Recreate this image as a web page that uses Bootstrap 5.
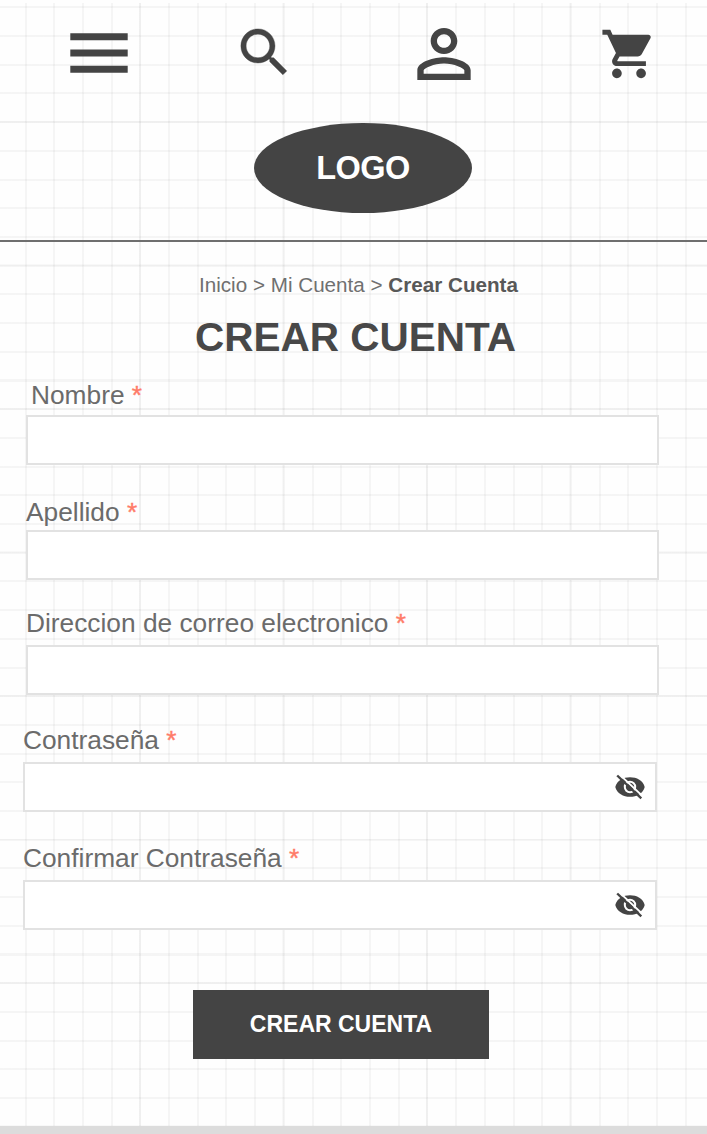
<!DOCTYPE html>
<html lang="es">
<head>
<meta charset="utf-8">
<meta name="viewport" content="width=device-width, initial-scale=1">
<title>Crear Cuenta</title>
<link href="https://cdn.jsdelivr.net/npm/bootstrap@5.3.0/dist/css/bootstrap.min.css" rel="stylesheet">
<style>
  body { font-family: "Liberation Sans", Arial, sans-serif; color: #484848; background: #fefefe; }
  .screen {
    height: 1134px; border-bottom: 8px solid #dcdcdc;
    background:
      linear-gradient(#fefefe 0 3px, transparent 3px),
      repeating-linear-gradient(90deg, transparent 0 139px, rgba(0,0,0,.025) 139px 141px, transparent 141px 143.5px),
      repeating-linear-gradient(transparent 0 121px, rgba(0,0,0,.025) 121px 123px, transparent 123px 143.5px),
      repeating-linear-gradient(90deg, transparent 0 24.6px, rgba(0,0,0,.036) 24.6px 26.6px, transparent 26.6px 28.7px),
      repeating-linear-gradient(transparent 0 6.4px, rgba(0,0,0,.036) 6.4px 8.4px, transparent 8.4px 28.7px),
      #fefefe;
  }
  .topbar { height: 242px; border-bottom: 2px solid #6f6f6f; }
  .tools { height: 123px; padding-left: 70px; }
  .tools svg { fill: #444; flex: none; }
  .ic-menu { margin-top: 33px; }
  .ic-search { margin: 21px 0 0 105px; stroke: #444; stroke-width: .15; }
  .ic-user { margin: 15px 0 0 108px; }
  .ic-cart { margin: 25px 0 0 116px; }
  .logo { width: 218px; height: 90px; margin-left: 254px; border-radius: 50%; background: #444; color: #fff; font-size: 32.5px; letter-spacing: -.5px; }
  .crumbs { height: 25px; margin: 30px 0 0 199px; font-size: 20.65px; line-height: 25px; color: #707070; }
  .crumbs strong { color: #585858; }
  h1 { height: 48px; margin: 16px 0 0 195px; font-size: 40.5px; line-height: 48px; }
  .field-label { font-size: 26.3px; line-height: 30px; height: 30px; color: #6b6b6b; }
  .req { color: #ff7b68; -webkit-text-stroke: .4px #ff7b68; }
  .field-box { height: 50px; border: 2px solid #e2e2e2; border-radius: 0; background: #fff; }
  .wide { width: 633px; margin-left: 26px; }
  .pass { width: 634px; margin-left: 23px; }
  .pass .field-box { padding-right: 10px; }
  .g1 { margin-top: 19px; } .g1 label { margin-left: 5px; } .g1 .field-box { margin-top: 5px; }
  .g2 { margin-top: 32px; } .g2 .field-box { margin-top: 3px; }
  .g3 { margin-top: 28px; } .g3 .field-box { margin-top: 7px; }
  .g4 { margin-top: 30px; } .g4 .field-box { margin-top: 7px; }
  .g5 { margin-top: 31px; } .g5 .field-box { margin-top: 7px; }
  .send { width: 296px; height: 69px; margin: 60px 0 0 193px; background: #444; border: 0; border-radius: 0; font-size: 23px; color: #fff; }
</style>
</head>
<body>
<svg class="d-none">
  <symbol id="eye-off" viewBox="0 0 30 26">
    <path fill="#444" d="M.3 13C1.800 6.400 8.400 3.200 15 3.200S28.200 6.400 29.700 13C28.200 19.600 21.600 22.800 15 22.800S1.800 19.600.3 13z"/>
    <circle cx="15" cy="13" r="5.200" fill="#444" stroke="#fff" stroke-width="2"/>
    <path d="M4.300 .3L28 22.500" stroke="#fff" stroke-width="1.800"/>
    <path d="M2.200 1.500L26.300 24.300" stroke="#444" stroke-width="2.400"/>
  </symbol>
</svg>
<div class="screen overflow-hidden">
  <header class="topbar">
    <nav class="tools d-flex align-items-start">
      <svg class="ic-menu" width="58" height="41" viewBox="0 0 58 41"><path d="M.3 .2h57.400v7H.3zM.3 16.500h57.400v7H.3zM.3 32.700h57.400v7H.3z"/></svg>
      <svg class="ic-search" width="63" height="63" viewBox="0 0 24 24"><path d="M15.5 14h-.79l-.28-.27C15.41 12.59 16 11.11 16 9.5 16 5.91 13.09 3 9.5 3S3 5.91 3 9.5 5.91 16 9.5 16c1.61 0 3.09-.59 4.23-1.57l.27.28v.79l5 4.99L20.49 19l-4.99-5zm-6 0C7.01 14 5 11.99 5 9.5S7.01 5 9.5 5 14 7.01 14 9.5 11.99 14 9.5 14z"/></svg>
      <svg class="ic-user" width="80" height="78" viewBox="0 0 24 24" preserveAspectRatio="none"><path d="M12 5.9c1.16 0 2.1.94 2.1 2.1s-.94 2.1-2.1 2.1S9.9 9.16 9.9 8s.94-2.1 2.1-2.1m0 9c2.97 0 6.1 1.46 6.1 2.1v1.1H5.9V17c0-.64 3.13-2.1 6.1-2.1M12 4C9.79 4 8 5.79 8 8s1.79 4 4 4 4-1.79 4-4-1.79-4-4-4zm0 9c-2.67 0-8 1.34-8 4v3h16v-3c0-2.66-5.33-4-8-4z"/></svg>
      <svg class="ic-cart" width="58" height="58" viewBox="0 0 24 24"><path d="M7 18c-1.100 0-1.990.9-1.990 2S5.900 22 7 22s2-.9 2-2-.9-2-2-2zM1 2v2h2l3.600 7.590-1.350 2.450c-.16.28-.25.61-.25.96 0 1.100.9 2 2 2h12v-2H7.420c-.14 0-.25-.11-.25-.25l.03-.12.9-1.630h7.450c.75 0 1.410-.41 1.750-1.030l3.580-6.490c.08-.14.12-.31.12-.48 0-.55-.45-1-1-1H5.210l-.94-2H1zm16 16c-1.100 0-1.990.9-1.990 2s.89 2 1.990 2 2-.9 2-2-.9-2-2-2z"/></svg>
    </nav>
    <div class="logo d-flex align-items-center justify-content-center fw-bold">LOGO</div>
  </header>
  <main>
    <div class="crumbs text-nowrap">Inicio &gt; Mi Cuenta &gt; <strong>Crear Cuenta</strong></div>
    <h1 class="fw-bold mb-0 text-nowrap">CREAR CUENTA</h1>
    <form>
      <div class="wide g1"><label class="field-label d-block">Nombre <span class="req">*</span></label><div class="field-box"></div></div>
      <div class="wide g2"><label class="field-label d-block">Apellido <span class="req">*</span></label><div class="field-box"></div></div>
      <div class="wide g3"><label class="field-label d-block">Direccion de correo electronico <span class="req">*</span></label><div class="field-box"></div></div>
      <div class="pass g4"><label class="field-label d-block">Contraseña <span class="req">*</span></label>
        <div class="field-box d-flex align-items-center justify-content-end"><svg width="30" height="26"><use href="#eye-off"/></svg></div></div>
      <div class="pass g5"><label class="field-label d-block">Confirmar Contraseña <span class="req">*</span></label>
        <div class="field-box d-flex align-items-center justify-content-end"><svg width="30" height="26"><use href="#eye-off"/></svg></div></div>
      <button type="button" class="btn send d-block fw-bold p-0">CREAR CUENTA</button>
    </form>
  </main>
</div>
<script src="https://cdn.jsdelivr.net/npm/bootstrap@5.3.0/dist/js/bootstrap.bundle.min.js"></script>
</body>
</html>
